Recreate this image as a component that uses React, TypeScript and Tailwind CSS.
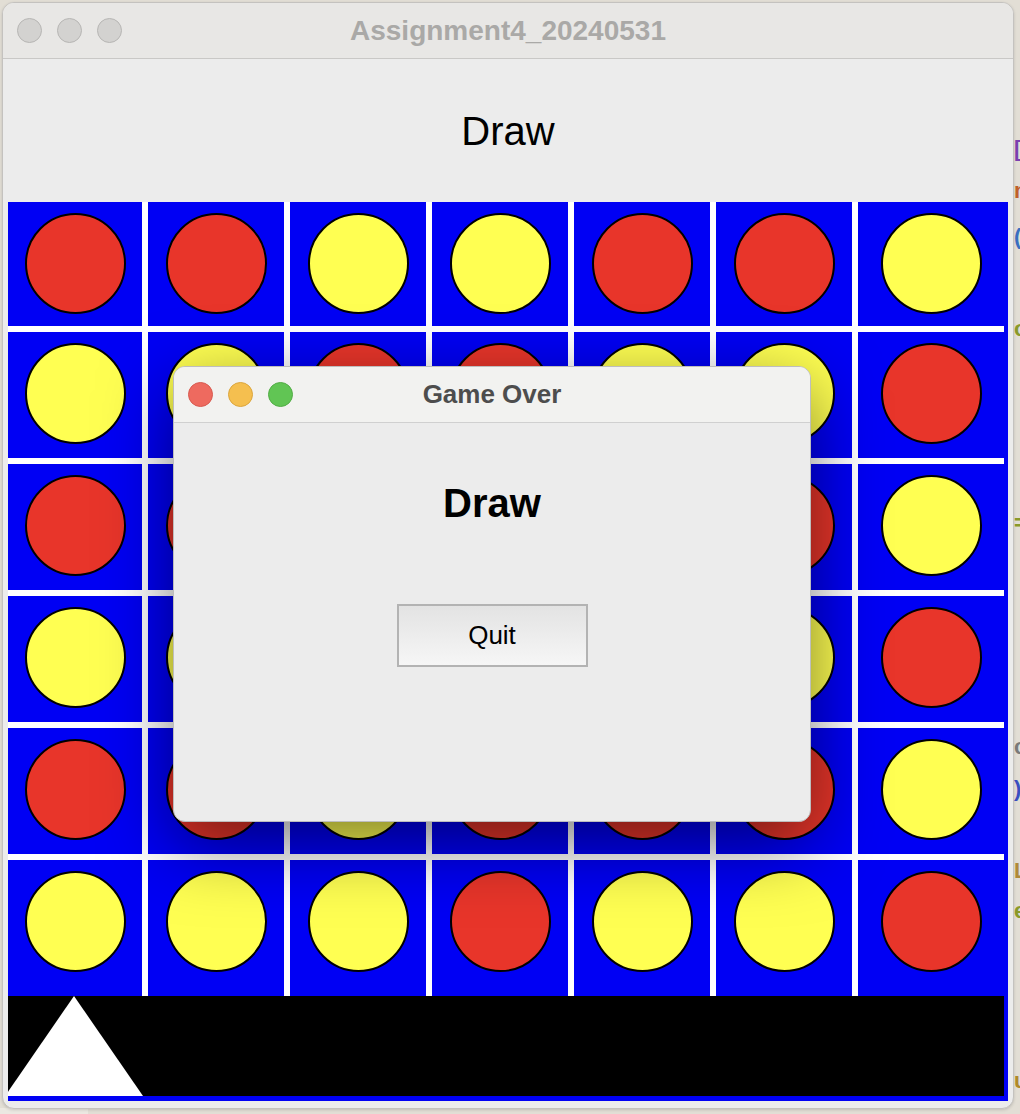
import React from 'react'

// R = red, Y = yellow; rows top to bottom
const board = [
  'RRYYRRY',
  'YYRRYYR',
  'RRYRYRY',
  'YYRYRYR',
  'RRYRRRY',
  'YYYRYYR',
]

const font = { fontFamily: '"Liberation Sans", Arial, sans-serif' }

function Piece({ c }: { c: string }) {
  return (
    <div
      className={
        'w-[101px] h-[101px] rounded-full border-2 border-black ' +
        (c === 'R' ? 'bg-[#e8352a]' : 'bg-[#ffff52]')
      }
    />
  )
}

// bits of the code editor peeking out behind the window
const behind = [
  { y: 138, ch: '[', cls: 'text-[#7b3fb0]' },
  { y: 180, ch: 'n', cls: 'text-[#c0602a]' },
  { y: 226, ch: '(', cls: 'text-[#3a6fc0]' },
  { y: 318, ch: 'o', cls: 'text-[#8a9a2a]' },
  { y: 512, ch: '=', cls: 'text-[#8a9a2a]' },
  { y: 736, ch: 'c', cls: 'text-[#7a7a7a]' },
  { y: 778, ch: ')', cls: 'text-[#3a4fc0]' },
  { y: 860, ch: 'L', cls: 'text-[#b08a3a]' },
  { y: 900, ch: 'e', cls: 'text-[#8a9a2a]' },
  { y: 1070, ch: 'u', cls: 'text-[#b08a2a]' },
]

export default function App() {
  return (
    <div className="relative w-[1020px] h-[1114px] overflow-hidden bg-[#e2ded5]" style={font}>
      {behind.map((b, i) => (
        <span key={i} className={'absolute left-[1014px] text-[22px] font-bold leading-none ' + b.cls} style={{ top: b.y }}>
          {b.ch}
        </span>
      ))}
      <div className="absolute left-0 top-[1108px] w-[88px] h-[6px] bg-[#ebe8e1]" />

      {/* main window */}
      <div className="absolute left-[2px] top-[2px] w-[1012px] h-[1107px] rounded-[12px] border border-[#c4c2bf] bg-[#ececec] overflow-hidden shadow-[0_1px_3px_rgba(0,0,0,0.15)]">
        <div className="relative h-[56px] bg-[#e8e7e5] border-b border-[#c9c8c6] flex items-center pl-[14px] gap-[15px]">
          <div className="w-[25px] h-[25px] rounded-full bg-[#d3d2d0] border border-[#b7b6b4]" />
          <div className="w-[25px] h-[25px] rounded-full bg-[#d3d2d0] border border-[#b7b6b4]" />
          <div className="w-[25px] h-[25px] rounded-full bg-[#d3d2d0] border border-[#b7b6b4]" />
          <div className="absolute inset-0 flex items-center justify-center text-[28px] font-bold text-[#aaa9a7]">
            Assignment4_20240531
          </div>
        </div>

        <div className="h-[143px] flex items-center justify-center text-[40px] text-black">Draw</div>

        <div className="ml-[5px] w-[1000px] h-[899px] bg-[#0000f4] flex flex-col pb-[5px]">
          <div className="w-[996px] grid grid-cols-[134px_repeat(5,136px)_146px] grid-rows-[124px_repeat(4,126px)_136px] gap-[6px] bg-white">
            {board.flatMap((row, r) =>
              row.split('').map((c, col) => (
                <div key={r + '-' + col} className="bg-[#0000f4] flex justify-center pt-[11px]">
                  <Piece c={c} />
                </div>
              ))
            )}
          </div>
          <div className="w-[996px] h-[100px] bg-black overflow-hidden">
            <svg width="996" height="100" viewBox="0 0 996 100">
              <polygon points="66,0 -3,100 135,100" fill="#fff" />
            </svg>
          </div>
        </div>
      </div>

      {/* Game Over dialog */}
      <div className="absolute left-[173px] top-[366px] w-[638px] h-[456px] rounded-[12px] bg-[#ececec] border border-[#bdbdbd] overflow-hidden shadow-[0_22px_70px_rgba(0,0,0,0.5)] flex flex-col items-center">
        <div className="relative w-full h-[56px] shrink-0 bg-[#f2f2f0] border-b border-[#d0d0d0] flex items-center pl-[14px] gap-[15px]">
          <div className="w-[25px] h-[25px] rounded-full bg-[#ee6a5f] border border-[#d85a50]" />
          <div className="w-[25px] h-[25px] rounded-full bg-[#f5bf4f] border border-[#dca63d]" />
          <div className="w-[25px] h-[25px] rounded-full bg-[#61c554] border border-[#52ad45]" />
          <div className="absolute inset-0 flex items-center justify-center text-[26px] font-bold text-[#4d4d4d]">
            Game Over
          </div>
        </div>
        <div className="mt-[56px] text-[40px] leading-[48px] font-bold text-black">Draw</div>
        <button className="mt-[77px] w-[191px] h-[63px] border-2 border-[#b3b3b3] bg-linear-to-b from-[#e3e3e3] to-[#f6f6f6] text-[26px] text-black">
          Quit
        </button>
      </div>
    </div>
  )
}
